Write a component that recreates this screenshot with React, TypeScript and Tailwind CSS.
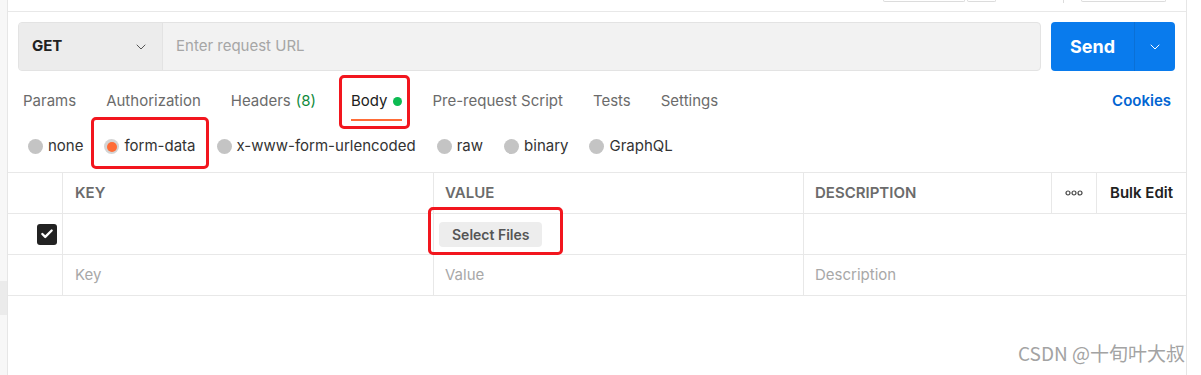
import { ChevronDown, Check } from "lucide-react";

const tabs = [
  { label: "Params" },
  { label: "Authorization" },
  { label: "Headers", count: "(8)" },
  { label: "Body", active: true },
  { label: "Pre-request Script" },
  { label: "Tests" },
  { label: "Settings" },
];

const bodyTypes = ["none", "form-data", "x-www-form-urlencoded", "raw", "binary", "GraphQL"];

function RedBox({ className }: { className: string }) {
  return <div className={`pointer-events-none absolute rounded-[5px] border-[3px] border-[#f2161e] ${className}`}></div>;
}

function Radio({ label }: { label: string }) {
  const selected = label === "form-data";
  return (
    <div className="relative flex items-center gap-[5px]">
      {selected ? (
        <span className="flex h-[15px] w-[15px] items-center justify-center rounded-full bg-[#d4d4d4]">
          <span className="h-[10px] w-[10px] rounded-full bg-[#ff6c37]"></span>
        </span>
      ) : (
        <span className="h-[15px] w-[15px] rounded-full bg-[#c4c4c4]"></span>
      )}
      <span className="text-[15px] text-[#333]">{label}</span>
      {selected && <RedBox className="-left-[13px] -right-[13px] -top-[18px] -bottom-[11px]" />}
    </div>
  );
}

export default function App() {
  return (
    <div className="relative flex h-[375px] w-[1201px] overflow-hidden bg-white font-['Inter',sans-serif]">
      {/* left strip */}
      <div className="w-[8px] shrink-0 border-r border-[#e6e6e6] bg-[#f7f7f7]">
        <div className="mt-[281px] h-[34px] bg-[#ebebeb]"></div>
      </div>

      {/* main */}
      <div className="w-[1179px] shrink-0 border-r border-[#e6e6e6]">
        {/* top strip */}
        <div className="flex h-[12px] items-start border-b border-[#e8e8e8]">
          <div className="ml-[875px] h-[2px] w-[82px] rounded-b-[4px] border-x border-b border-[#dcdcdc]"></div>
          <div className="ml-[2px] h-[2px] w-[29px] rounded-b-[4px] border-x border-b border-[#dcdcdc]"></div>
          <div className="ml-[67px] h-[3px] w-px bg-[#dcdcdc]"></div>
          <div className="ml-[17px] h-[2px] w-[85px] rounded-b-[4px] border-x border-b border-[#dcdcdc]"></div>
        </div>

        {/* url row */}
        <div className="mt-[10px] flex gap-[10px] pl-[10px] pr-[11px]">
          <div className="flex h-[49px] flex-1 overflow-hidden rounded-[4px] border border-[#e3e3e3] bg-[#f2f2f2]">
            <div className="flex w-[144px] items-center justify-between border-r border-[#e3e3e3] bg-[#ececec] pl-[13px] pr-[13px]">
              <span className="text-[15px] font-bold text-[#212121]">GET</span>
              <ChevronDown className="h-[16px] w-[16px] text-[#555]" strokeWidth={1.5} />
            </div>
            <div className="flex items-center pl-[13px] text-[15px] text-[#a6a6a6]">Enter request URL</div>
          </div>
          <div className="flex h-[49px] w-[124px] overflow-hidden rounded-[4px] bg-[#097bed]">
            <div className="flex w-[84px] items-center justify-center border-r border-[#0a70d6] text-[18px] font-bold text-white">
              Send
            </div>
            <div className="flex flex-1 items-center justify-center">
              <ChevronDown className="h-[16px] w-[16px] text-white" strokeWidth={1.5} />
            </div>
          </div>
        </div>

        {/* tabs */}
        <div className="mt-[12px] flex h-[38px] items-stretch pl-[15px] pr-[15px]">
          <div className="flex gap-[30px]">
            {tabs.map((t) => (
              <div
                key={t.label}
                className={`relative flex items-center border-b-2 text-[15px] ${
                  t.active ? "border-[#ff6c37] text-[#212121]" : "border-transparent text-[#6b6b6b]"
                } ${t.label === "Body" ? "ml-[5px]" : ""}`}
              >
                {t.label}
                {t.count && <span className="ml-[5px] text-[#0f8a3c]">{t.count}</span>}
                {t.active && <span className="ml-[6px] h-[9px] w-[9px] rounded-full bg-[#0cbb52]"></span>}
                {t.active && <RedBox className="-left-[12px] -right-[8px] -top-[8px] -bottom-[10px]" />}
              </div>
            ))}
          </div>
          <div className="ml-auto flex items-center pb-[2px] text-[15px] font-semibold text-[#0265d2]">Cookies</div>
        </div>

        {/* body type radios */}
        <div className="flex h-[51px] items-center gap-[21px] pl-[20px]">
          {bodyTypes.map((b) => (
            <Radio key={b} label={b} />
          ))}
        </div>

        {/* table */}
        <div className="text-[15px]">
          <div className="grid h-[42px] grid-cols-[55px_371px_370px_248px_45px_90px] border-y border-[#e8e8e8]">
            <div className="border-r border-[#e8e8e8]"></div>
            <div className="flex items-center border-r border-[#e8e8e8] pl-[12px] font-semibold text-[#6b6b6b]">KEY</div>
            <div className="flex items-center border-r border-[#e8e8e8] pl-[11px] font-semibold text-[#6b6b6b]">VALUE</div>
            <div className="flex items-center border-r border-[#e8e8e8] pl-[11px] font-semibold text-[#6b6b6b]">DESCRIPTION</div>
            <div className="flex items-center justify-center border-r border-[#e8e8e8]">
              <svg width="18" height="6" viewBox="0 0 18 6" fill="none" stroke="#444" strokeWidth="1.2">
                <circle cx="3" cy="3" r="2" />
                <circle cx="9" cy="3" r="2" />
                <circle cx="15" cy="3" r="2" />
              </svg>
            </div>
            <div className="flex items-center pl-[13px] font-semibold text-[#212121]">Bulk Edit</div>
          </div>

          <div className="grid h-[41px] grid-cols-[55px_371px_370px_383px] border-b border-[#e8e8e8]">
            <div className="flex items-center border-r border-[#e8e8e8] pl-[29px]">
              <span className="flex h-[21px] w-[20px] items-center justify-center rounded-[3px] bg-[#222]">
                <Check className="h-[14px] w-[14px] text-white" strokeWidth={4} />
              </span>
            </div>
            <div className="border-r border-[#e8e8e8]"></div>
            <div className="flex items-center border-r border-[#e8e8e8] pl-[5px]">
              <div className="relative">
                <button className="h-[25px] rounded-[4px] bg-[#ededed] px-[13px] text-[14px] font-semibold text-[#555]">
                  Select Files
                </button>
                <RedBox className="-left-[11px] -right-[21px] -top-[15px] -bottom-[8px]" />
              </div>
            </div>
            <div></div>
          </div>

          <div className="grid h-[41px] grid-cols-[55px_371px_370px_383px] border-b border-[#e8e8e8] text-[#a8a8a8]">
            <div className="border-r border-[#e8e8e8]"></div>
            <div className="flex items-center border-r border-[#e8e8e8] pl-[12px]">Key</div>
            <div className="flex items-center border-r border-[#e8e8e8] pl-[11px]">Value</div>
            <div className="flex items-center pl-[11px]">Description</div>
          </div>
        </div>
      </div>

      {/* watermark */}
      <div className="pointer-events-none absolute bottom-[8px] right-[16px] font-['Noto_Sans_CJK_SC',sans-serif] text-[19px] text-[#a3a3a3]">
        CSDN @十旬叶大叔
      </div>
    </div>
  );
}
